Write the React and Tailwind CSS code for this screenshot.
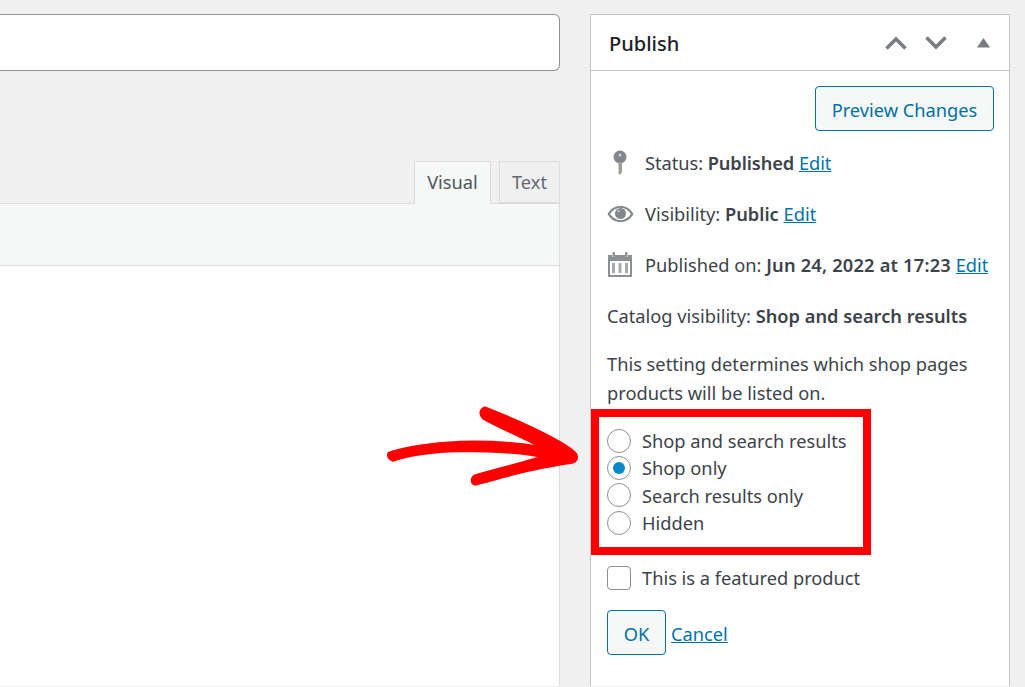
// App.jsx
const font = { fontFamily: '"Noto Sans", "Open Sans", sans-serif' };

function Radio({ label, checked }) {
  return (
    <div className="flex h-[27.33px] items-center">
      <span className="flex h-[24px] w-[24px] shrink-0 items-center justify-center rounded-full border border-[#8c8f94] bg-white">
        {checked && <span className="h-[12px] w-[12px] rounded-full bg-[#0a87ca]" />}
      </span>
      <span className="ml-[11px]">{label}</span>
    </div>
  );
}

function EditLink() {
  return <a href="#" className="text-[#0073aa] underline">Edit</a>;
}

function Arrow() {
  return (
    <svg className="absolute left-[380px] top-[395px]" width="210" height="100" viewBox="0 0 630 300">
      <path
        fill="#ff0000"
        stroke="#ff0000"
        strokeWidth="8"
        strokeLinejoin="round"
        d="M26 175 C60 160 150 145 240 141 C320 139 420 145 486 158 C430 125 350 94 310 70 C300 60 298 44 315 38 C380 64 450 92 510 126 C550 147 576 162 588 178 C594 193 586 202 570 203 C520 211 430 228 380 243 C340 253 310 263 285 268 C274 264 272 252 285 242 C340 226 430 204 486 185 C420 171 320 167 240 167 C170 169 90 179 40 196 C30 194 22 186 26 175 Z"
      />
    </svg>
  );
}

export default function App() {
  return (
    <div style={font} className="relative flex h-[687px] w-[1025px] overflow-hidden bg-[#f0f0f1] pb-[1px] pt-[14px] text-[18.25px] text-[#3c434a]">
      <div className="flex w-[560px] flex-col">
        <div className="h-[57px] rounded-r-[6px] border border-l-0 border-[#8c8f94] bg-white" />
        <div className="mt-[90px] flex h-[43px] justify-end border-b border-[#dcdcde]">
          <div className="z-10 -mb-px flex h-[43px] w-[77px] items-center justify-center border border-b-0 border-[#dcdcde] bg-[#f6f7f7] pb-[3px] text-[#50575e]">Visual</div>
          <div className="ml-[8px] flex h-[42px] w-[61px] items-center justify-center border border-[#dcdcde] bg-[#f0f0f1] text-[#646970]">Text</div>
        </div>
        <div className="flex-1 border-r border-[#dcdcde] bg-white">
          <div className="h-[62px] border-b border-[#dcdcde] bg-[#f6f7f7]" />
        </div>
      </div>

      <div className="ml-[30px] w-[420px] border border-b-0 border-[#c3c4c7] bg-white">
        <div className="flex h-[56px] items-center border-b border-[#c3c4c7] pl-[18px] pr-[19px]">
          <h2 className="pt-[2px] text-[20px] font-medium text-[#1d2327]">Publish</h2>
          <div className="ml-auto flex items-center">
            <svg width="22" height="14" viewBox="0 0 22 14" fill="none" stroke="#787c82" strokeWidth="3.5"><path d="M1.5 12.5 L11 3 L20.5 12.5" /></svg>
            <svg className="ml-[18px]" width="22" height="14" viewBox="0 0 22 14" fill="none" stroke="#787c82" strokeWidth="3.5"><path d="M1.5 1.5 L11 11 L20.5 1.5" /></svg>
            <svg className="ml-[30px]" width="13" height="10" viewBox="0 0 13 10" fill="#787c82"><path d="M6.5 0 L13 9.5 L0 9.5 Z" /></svg>
          </div>
        </div>

        <div className="px-[16px]">
          <div className="flex justify-end pt-[15px]">
            <button className="mr-[-1px] h-[45px] w-[179px] rounded-[4px] border border-[#0071a1] bg-[#f6f7f7] pt-[2px] text-[#0071a1]">Preview Changes</button>
          </div>

          <div className="mt-[6px] flex h-[51px] items-center">
            <svg className="ml-[4px] mr-[16px]" width="18" height="26" viewBox="0 0 18 26">
              <circle cx="9" cy="7" r="6.5" fill="#82878c" />
              <circle cx="9" cy="5" r="1.5" fill="#fff" opacity="0.6" />
              <path d="M7.5 12 H11 V22 L9 25 L7.5 24 Z" fill="#a59b94" />
            </svg>
            <span className="tracking-[-0.05px]">Status: <b className="font-semibold tracking-[-0.1px]">Published</b> <EditLink /></span>
          </div>
          <div className="flex h-[51px] items-center">
            <svg className="mr-[11px]" width="27" height="20" viewBox="0 0 27 20">
              <path d="M0.5 10 C4 4 8.5 2 13.5 2 C18.5 2 23 4 26.5 10 C23 16 18.5 18 13.5 18 C8.5 18 4 16 0.5 10 Z M3 10 C6 14 9.5 16.2 13.5 16.2 C17.5 16.2 21 14 24 10 C21 6 17.5 3.8 13.5 3.8 C9.5 3.8 6 6 3 10 Z" fill="#82878c" fillRule="evenodd" />
              <circle cx="13.5" cy="9.5" r="5.5" fill="#82878c" />
              <circle cx="11.5" cy="7" r="1.5" fill="#b4b7ba" />
            </svg>
            <span>Visibility: <b className="font-semibold">Public</b> <EditLink /></span>
          </div>
          <div className="flex h-[51px] items-center">
            <svg className="ml-[1px] mr-[13px]" width="24" height="25" viewBox="0 0 24 25">
              <path d="M0 3 H4 V5 H7 V3 H17 V5 H20 V3 H24 V25 H0 Z" fill="#8c8f94" />
              <rect x="4.5" y="0" width="2.5" height="5" rx="1" fill="#8c8f94" />
              <rect x="17" y="0" width="2.5" height="5" rx="1" fill="#8c8f94" />
              <rect x="2" y="9" width="20" height="14" fill="#fff" />
              <rect x="4" y="11" width="3" height="10" fill="#a7aaad" />
              <rect x="10.5" y="11" width="3" height="10" fill="#a7aaad" />
              <rect x="17" y="11" width="3" height="10" fill="#a7aaad" />
            </svg>
            <span>Published on: <b className="font-semibold tracking-[0.2px]">Jun 24, 2022 at 17:23</b> <EditLink /></span>
          </div>
          <div className="flex h-[51px] items-center">
            <span>Catalog visibility: <b className="font-semibold">Shop and search results</b></span>
          </div>

          <p className="mt-[8px] leading-[29px]">This setting determines which shop pages<br />products will be listed on.</p>

          <div className="-ml-[16px] mt-[2px] h-[146px] w-[280px] border-[8px] border-[#ff0000] py-[10px] pl-[8px]">
            <Radio label="Shop and search results" />
            <Radio label="Shop only" checked />
            <Radio label="Search results only" />
            <Radio label="Hidden" />
          </div>

          <div className="mt-[9px] flex h-[28px] items-center">
            <span className="h-[24px] w-[24px] rounded-[4px] border border-[#8c8f94] bg-white" />
            <span className="ml-[11px]">This is a featured product</span>
          </div>
          <div className="mt-[18px] flex items-center">
            <button className="h-[45px] w-[59px] rounded-[4px] border border-[#0071a1] bg-[#f6f7f7] pt-[2px] text-[#0071a1]">OK</button>
            <a href="#" className="ml-[5px] pt-[2px] text-[#0073aa] underline">Cancel</a>
          </div>
        </div>
      </div>

      <Arrow />
    </div>
  );
}
